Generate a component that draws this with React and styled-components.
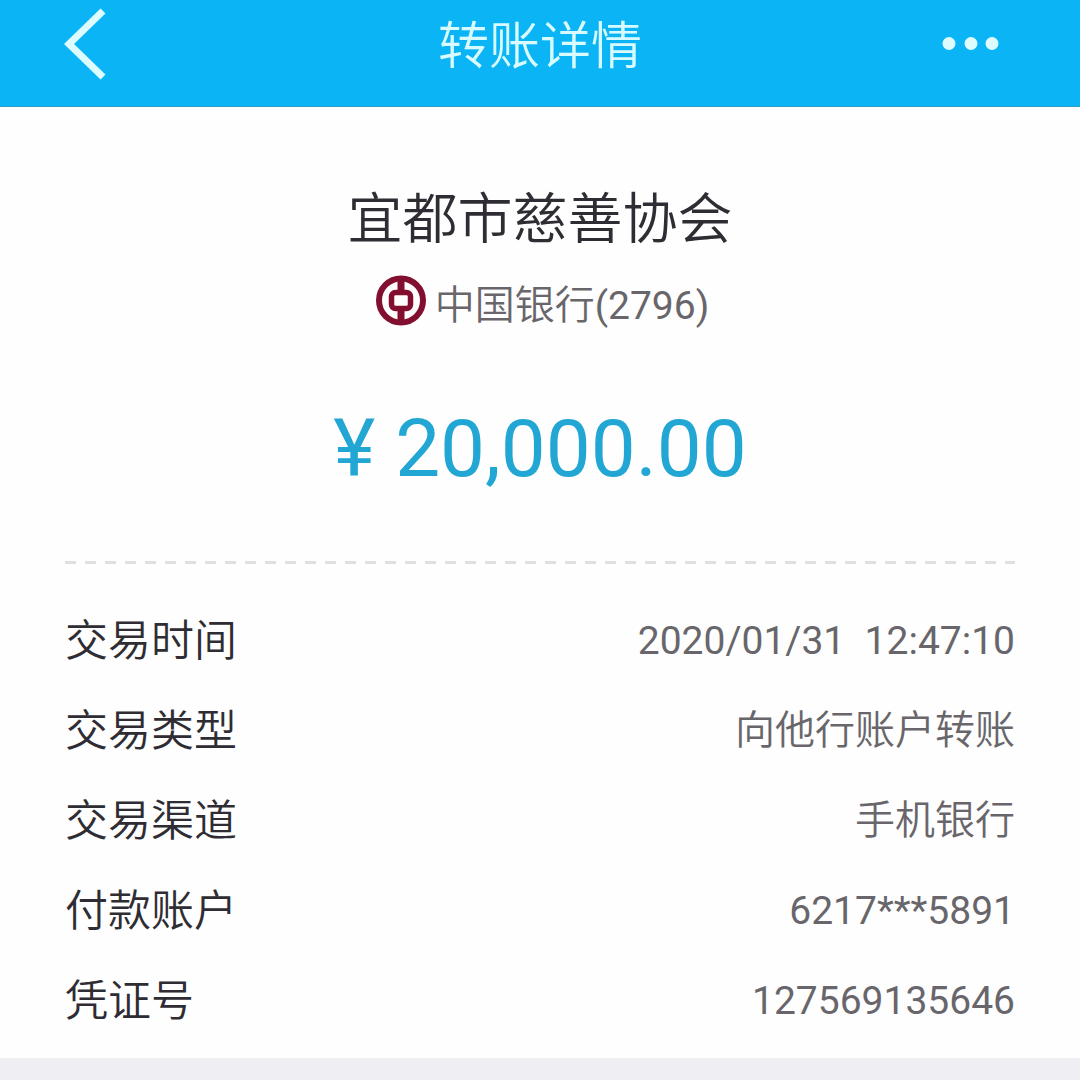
import React from 'react'
import styled, { createGlobalStyle } from 'styled-components'

const GlobalStyle = createGlobalStyle`
    :root {
        --blue: #0bb4f5;
        --amount: #22a7d5;
        --ink: #2f2d33;
        --grey: #68666b;
    }
    * {
        box-sizing: border-box;
    }
    body {
        margin: 0;
        background: #efeef3;
        font-family: Roboto, "Noto Sans CJK SC", sans-serif;
    }
`

const Page = styled.div`
    min-height: 100vh;
    display: flex;
    flex-direction: column;
`
const Header = styled.header`
    display: grid;
    grid-template-columns: 1fr auto 1fr;
    align-items: center;
    height: 107px;
    padding: 0 64px 18px;
    background: var(--blue);
    border-bottom: 1px solid #2f9fc4;
`
const HeaderTitle = styled.h1`
    margin: 0;
    padding-top: 6px;
    font-size: 51px;
    line-height: 60px;
    font-weight: 350;
    color: #d8fbff;
`
const IconButton = styled.button`
    display: flex;
    justify-self: ${props => props.$side};
    padding: ${props => (props.$side === 'end' ? '0 16px' : '0')};
    border: 0;
    background: none;
    color: #dcfcff;
    cursor: pointer;
`

const Receipt = styled.main`
    padding: 80px 65px 12px;
    background: #fefefe;
`
const Summary = styled.section`
    display: flex;
    flex-direction: column;
    align-items: center;
`
const Payee = styled.h2`
    margin: 0;
    font-size: 55px;
    line-height: 64px;
    font-weight: 350;
    color: var(--ink);
`
const Bank = styled.p`
    display: flex;
    align-items: flex-start;
    gap: 8px;
    margin: 24px 0 0;
    padding-left: 4px;
    font-size: 39px;
    line-height: 62px;
    color: var(--grey);
`
const Amount = styled.p`
    margin: 64px 0 0;
    font-size: 80px;
    line-height: 96px;
    color: var(--amount);
`
const BankName = styled.span`
    font-size: 40px;
    font-weight: 350;
`
const Divider = styled.hr`
    height: 3px;
    margin: 64px 0 32px;
    border: 0;
    background: repeating-linear-gradient(90deg, #e0dfe3 0 11px, transparent 11px 20px);
`

const Details = styled.dl`
    margin: 0;
`
const DetailRow = styled.div`
    display: flex;
    justify-content: space-between;
    align-items: center;
    height: 90px;
`
const DetailLabel = styled.dt`
    font-size: 43px;
    line-height: 60px;
    font-weight: 350;
    color: var(--ink);
`
const DetailValue = styled.dd`
    margin: 0;
    font-size: ${props => (props.$chinese ? '40px' : '39px')};
    line-height: 60px;
    font-weight: ${props => (props.$chinese ? 350 : 400)};
    white-space: pre;
    color: var(--grey);
`

const BackIcon = () => (
    <svg width="44" height="72" viewBox="0 0 44 72" fill="none" aria-hidden="true">
        <path d="M39 3L5 36L39 69" stroke="currentColor" strokeWidth="7" />
    </svg>
)

const MoreIcon = () => (
    <svg width="58" height="14" viewBox="0 0 58 14" fill="currentColor" aria-hidden="true">
        <circle cx="7" cy="6.500" r="6.500" />
        <circle cx="29" cy="6.500" r="6.500" />
        <circle cx="50" cy="6.500" r="6.500" />
    </svg>
)

const BankLogo = () => (
    <svg width="52" height="52" viewBox="0 0 52 52" fill="none" stroke="#820f30" aria-hidden="true">
        <circle cx="26" cy="25.500" r="22" strokeWidth="6" />
        <path d="M26 5V16M26 35V47" strokeWidth="7" />
        <rect x="16.500" y="17.500" width="19" height="16" rx="4" strokeWidth="5.500" />
    </svg>
)

const details = [
    { label: '交易时间', value: '2020/01/31  12:47:10' },
    { label: '交易类型', value: '向他行账户转账', chinese: true },
    { label: '交易渠道', value: '手机银行', chinese: true },
    { label: '付款账户', value: '6217***5891' },
    { label: '凭证号', value: '127569135646' },
]

const App = () => (
    <Page>
        <GlobalStyle />
        <Header>
            <IconButton type="button" $side="start" aria-label="返回">
                <BackIcon />
            </IconButton>
            <HeaderTitle>转账详情</HeaderTitle>
            <IconButton type="button" $side="end" aria-label="更多">
                <MoreIcon />
            </IconButton>
        </Header>
        <Receipt>
            <Summary>
                <Payee>宜都市慈善协会</Payee>
                <Bank>
                    <BankLogo />
                    <span><BankName>中国银行</BankName>(2796)</span>
                </Bank>
                <Amount>¥ 20,000.00</Amount>
            </Summary>
            <Divider />
            <Details>
                {details.map(row => (
                    <DetailRow key={row.label}>
                        <DetailLabel>{row.label}</DetailLabel>
                        <DetailValue $chinese={row.chinese}>{row.value}</DetailValue>
                    </DetailRow>
                ))}
            </Details>
        </Receipt>
    </Page>
)

export default App
